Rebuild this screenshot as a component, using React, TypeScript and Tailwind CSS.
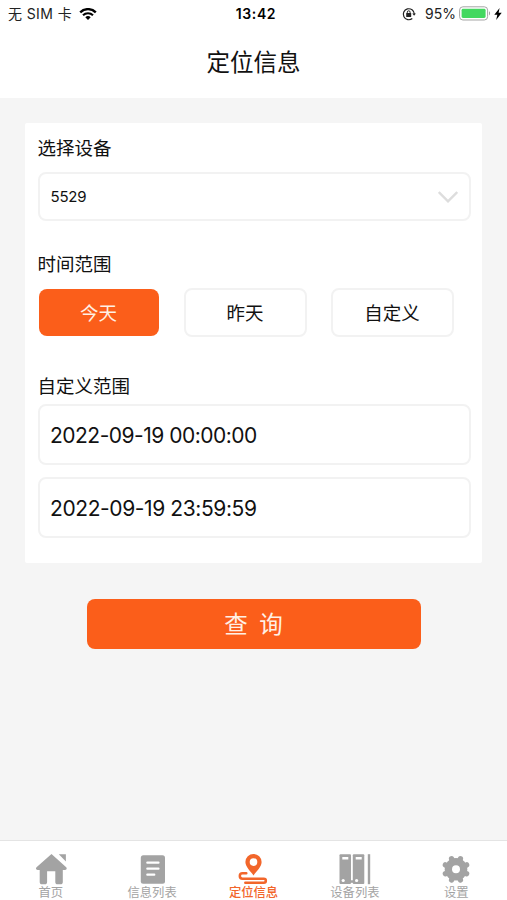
import { useState } from "react";
import type { ReactNode } from "react";

type Tab = { label: string; icon: ReactNode };

const RANGES = [
  { label: "今天", className: "w-[120px] h-[47px]" },
  { label: "昨天", className: "w-[123px] h-[49px] ml-[25px]" },
  { label: "自定义", className: "w-[123px] h-[49px] ml-6" },
];

const TIMES = [
  { value: "2022-09-19 00:00:00", className: "tracking-[-0.5px]" },
  { value: "2022-09-19 23:59:59", className: "tracking-[-0.4px]" },
];

const TABS: Tab[] = [
  {
    label: "首页",
    icon: (
      <g fill="currentColor">
        <path d="M16.5 1 1.5 14.2c-1.1 1.3-.3 2.7 1.200 2.700h2V29c0 1.500.8 2.300 2.300 2.300h2.800c1.500 0 2.300-.8 2.300-2.300V18.300h8.200V29c0 1.500.8 2.300 2.300 2.300h2.900c1.500 0 2.300-.8 2.300-2.300V16.900h2.200c1.600 0 2.200-1.500 1.200-2.700z" />
        <path d="M23.800 1.200h7.100v7.200z" />
      </g>
    ),
  },
  {
    label: "信息列表",
    icon: (
      <>
        <rect x="4.800" y="2.300" width="24.200" height="28.400" rx="2.500" fill="currentColor" />
        <path
          d="M11.300 9.700h11.200M11.300 15.700h11.200M11.300 21.700h7"
          stroke="white"
          strokeWidth="2.200"
          strokeLinecap="round"
        />
      </>
    ),
  },
  {
    label: "定位信息",
    icon: (
      <>
        <path
          fill="currentColor"
          fillRule="evenodd"
          d="M16.500 1a8.100 8.100 0 0 0-8.100 8.100c0 5 5.200 9.200 8.100 13.400 2.900-4.200 8.100-8.400 8.100-13.400A8.100 8.100 0 0 0 16.500 1zm0 4.300a3.800 3.800 0 1 1 0 7.600 3.800 3.800 0 0 1 0-7.600z"
        />
        <path
          d="M9.300 20.300H5.500a2.700 2.700 0 0 0 0 5.400h21.300a2 2 0 0 1 0 4.100H8.300"
          fill="none"
          stroke="currentColor"
          strokeWidth="2.500"
          strokeLinecap="round"
        />
      </>
    ),
  },
  {
    label: "设备列表",
    icon: (
      <>
        <rect x=".5" y="1.200" width="11.500" height="29.800" rx="1" fill="currentColor" />
        <rect x="13.800" y="1.200" width="11.500" height="29.800" rx="1" fill="currentColor" />
        <path d="M11 27.300h4v2.500h-4z" fill="currentColor" />
        <path d="M30 1.200v30" stroke="currentColor" strokeWidth="2.400" />
        <path d="M3.300 4h6v2.600h-6zM16.700 4h6v2.600h-6z" fill="white" />
        <circle cx="4.200" cy="27.500" r="1.600" fill="white" />
        <circle cx="17.600" cy="27.500" r="1.600" fill="white" />
      </>
    ),
  },
  {
    label: "设置",
    icon: (
      <>
        <circle cx="16" cy="16.300" r="11.300" fill="currentColor" />
        <g stroke="currentColor" strokeWidth="5.400" strokeLinecap="round">
          <path d="M11.600 5.700l8.800 21.200M20.400 5.700l-8.800 21.200M5.400 11.900l21.200 8.800M26.600 11.900L5.400 20.700" />
        </g>
        <circle cx="16" cy="16.300" r="4" fill="white" />
      </>
    ),
  },
];

function StatusBar() {
  return (
    <div className="grid h-[27px] grid-cols-3 items-center text-[14px] text-[#222]">
      <div className="flex items-center pl-2">
        <span className="tracking-[0.4px]">无 SIM 卡</span>
        <svg className="ml-[7px] h-3 w-[18px]" viewBox="0 0 18 12" fill="none" stroke="black">
          <path d="M1.200 4.300a11.200 11.200 0 0 1 15.600 0" strokeWidth="2.400" />
          <path d="M4 7.300a7.200 7.200 0 0 1 10 0" strokeWidth="2.100" />
          <path d="M9 12 6.300 9.300a3.900 3.900 0 0 1 5.400 0z" fill="black" stroke="none" />
        </svg>
      </div>
      <span className="pl-[5px] text-center font-semibold tracking-[0.6px] text-black">13:42</span>
      <div className="flex items-center justify-end pr-[5px]">
        <svg className="mr-[9px] h-[14px] w-[14px]" viewBox="0 0 14 14" fill="none" stroke="#222">
          <path d="M10.300 11.500a5.500 5.500 0 1 1 2-4.500" strokeWidth="1.200" />
          <path d="M10.300 6.500h3.600l-1.800 2.300z" fill="#222" stroke="none" />
          <rect x="4.200" y="6.100" width="5" height="3.900" rx=".5" fill="#222" stroke="none" />
          <path d="M5.300 6.500V5.200a1.400 1.400 0 0 1 2.800 0v1.300" />
        </svg>
        <span>95%</span>
        <svg className="ml-[3px] h-[15px] w-8" viewBox="0 0 32 15">
          <rect x=".6" y=".8" width="28" height="13.200" rx="3.300" fill="white" stroke="#a5a5a5" />
          <rect x="2.600" y="2.800" width="24" height="9.200" rx="1.400" fill="#43d860" />
          <path d="M30 5.300c1.500.7 1.500 3.500 0 4.200z" fill="#a5a5a5" />
        </svg>
        <svg className="ml-[3px] h-3 w-2" viewBox="0 0 8 12">
          <path d="M5.600 0 .3 6.800h3L2.200 12l5.500-7.200H4.600z" fill="black" />
        </svg>
      </div>
    </div>
  );
}

export default function App() {
  const [range, setRange] = useState(0);
  const [tab, setTab] = useState(2);

  return (
    <div className="flex h-[900px] w-full flex-col bg-[#f5f5f5] font-['Inter','Noto_Sans_CJK_SC',sans-serif] text-[#111]">
      <header className="h-[98px] bg-white">
        <StatusBar />
        <h1 className="pt-[19px] text-center text-[23.5px] leading-[34px]">定位信息</h1>
      </header>

      <main className="flex-1 pt-[25px]">
        <section className="mx-[25px] h-[440px] rounded-xs bg-white pt-[11px] pr-[13px] pl-[12.5px]">
          <h2 className="text-[18.5px] leading-7">选择设备</h2>
          <button className="mt-[10px] flex h-[49px] w-[433px] items-center justify-between rounded-lg border-2 border-[#f2f2f2] px-[11px] text-[15px]">
            <span className="pt-0.5 tracking-[-0.2px]">5529</span>
            <svg className="h-3 w-5" viewBox="0 0 20 12" fill="none">
              <path d="M.8 1 10 10.300 19.200 1" stroke="#ddd" strokeWidth="2.400" />
            </svg>
          </button>

          <h2 className="mt-[29px] text-[18.5px] leading-7">时间范围</h2>
          <div className="mt-[10px] flex h-[49px] items-center pl-px text-[18.5px]">
            {RANGES.map((item, i) => (
              <button
                key={item.label}
                onClick={() => setRange(i)}
                className={`rounded-lg pt-0.5 ${item.className} ${
                  range === i ? "bg-[#fb5e1a] text-[#fff0e5]" : "border-2 border-[#f2f2f2] bg-white"
                }`}
              >
                {item.label}
              </button>
            ))}
          </div>

          <h2 className="mt-[35px] text-[18.5px] leading-7">自定义范围</h2>
          <div className="mt-1 flex flex-col gap-3">
            {TIMES.map((time) => (
              <div
                key={time.value}
                className={`flex h-[61px] w-[433px] items-center rounded-lg border-2 border-[#f2f2f2] pt-0.5 pl-[10.5px] text-[21px] ${time.className}`}
              >
                {time.value}
              </div>
            ))}
          </div>
        </section>

        <button className="mx-auto mt-9 block h-[50px] w-[334px] rounded-lg bg-[#fb5e1a] pt-0.5 text-[23.5px] text-[#fff0e5]">
          查&ensp;询
        </button>
      </main>

      <nav className="grid h-[60px] grid-cols-5 border-t border-[#e4e4e4] bg-white">
        {TABS.map((item, i) => (
          <button
            key={item.label}
            onClick={() => setTab(i)}
            className={`flex flex-col items-center pt-3 text-[12.3px] leading-[15px] ${
              tab === i ? "font-medium text-[#f2662b]" : "text-[#a3a3a3]"
            }`}
          >
            <svg className="h-8 w-8 shrink-0" viewBox="0 0 32 32">
              {item.icon}
            </svg>
            <span>{item.label}</span>
          </button>
        ))}
      </nav>
    </div>
  );
}
